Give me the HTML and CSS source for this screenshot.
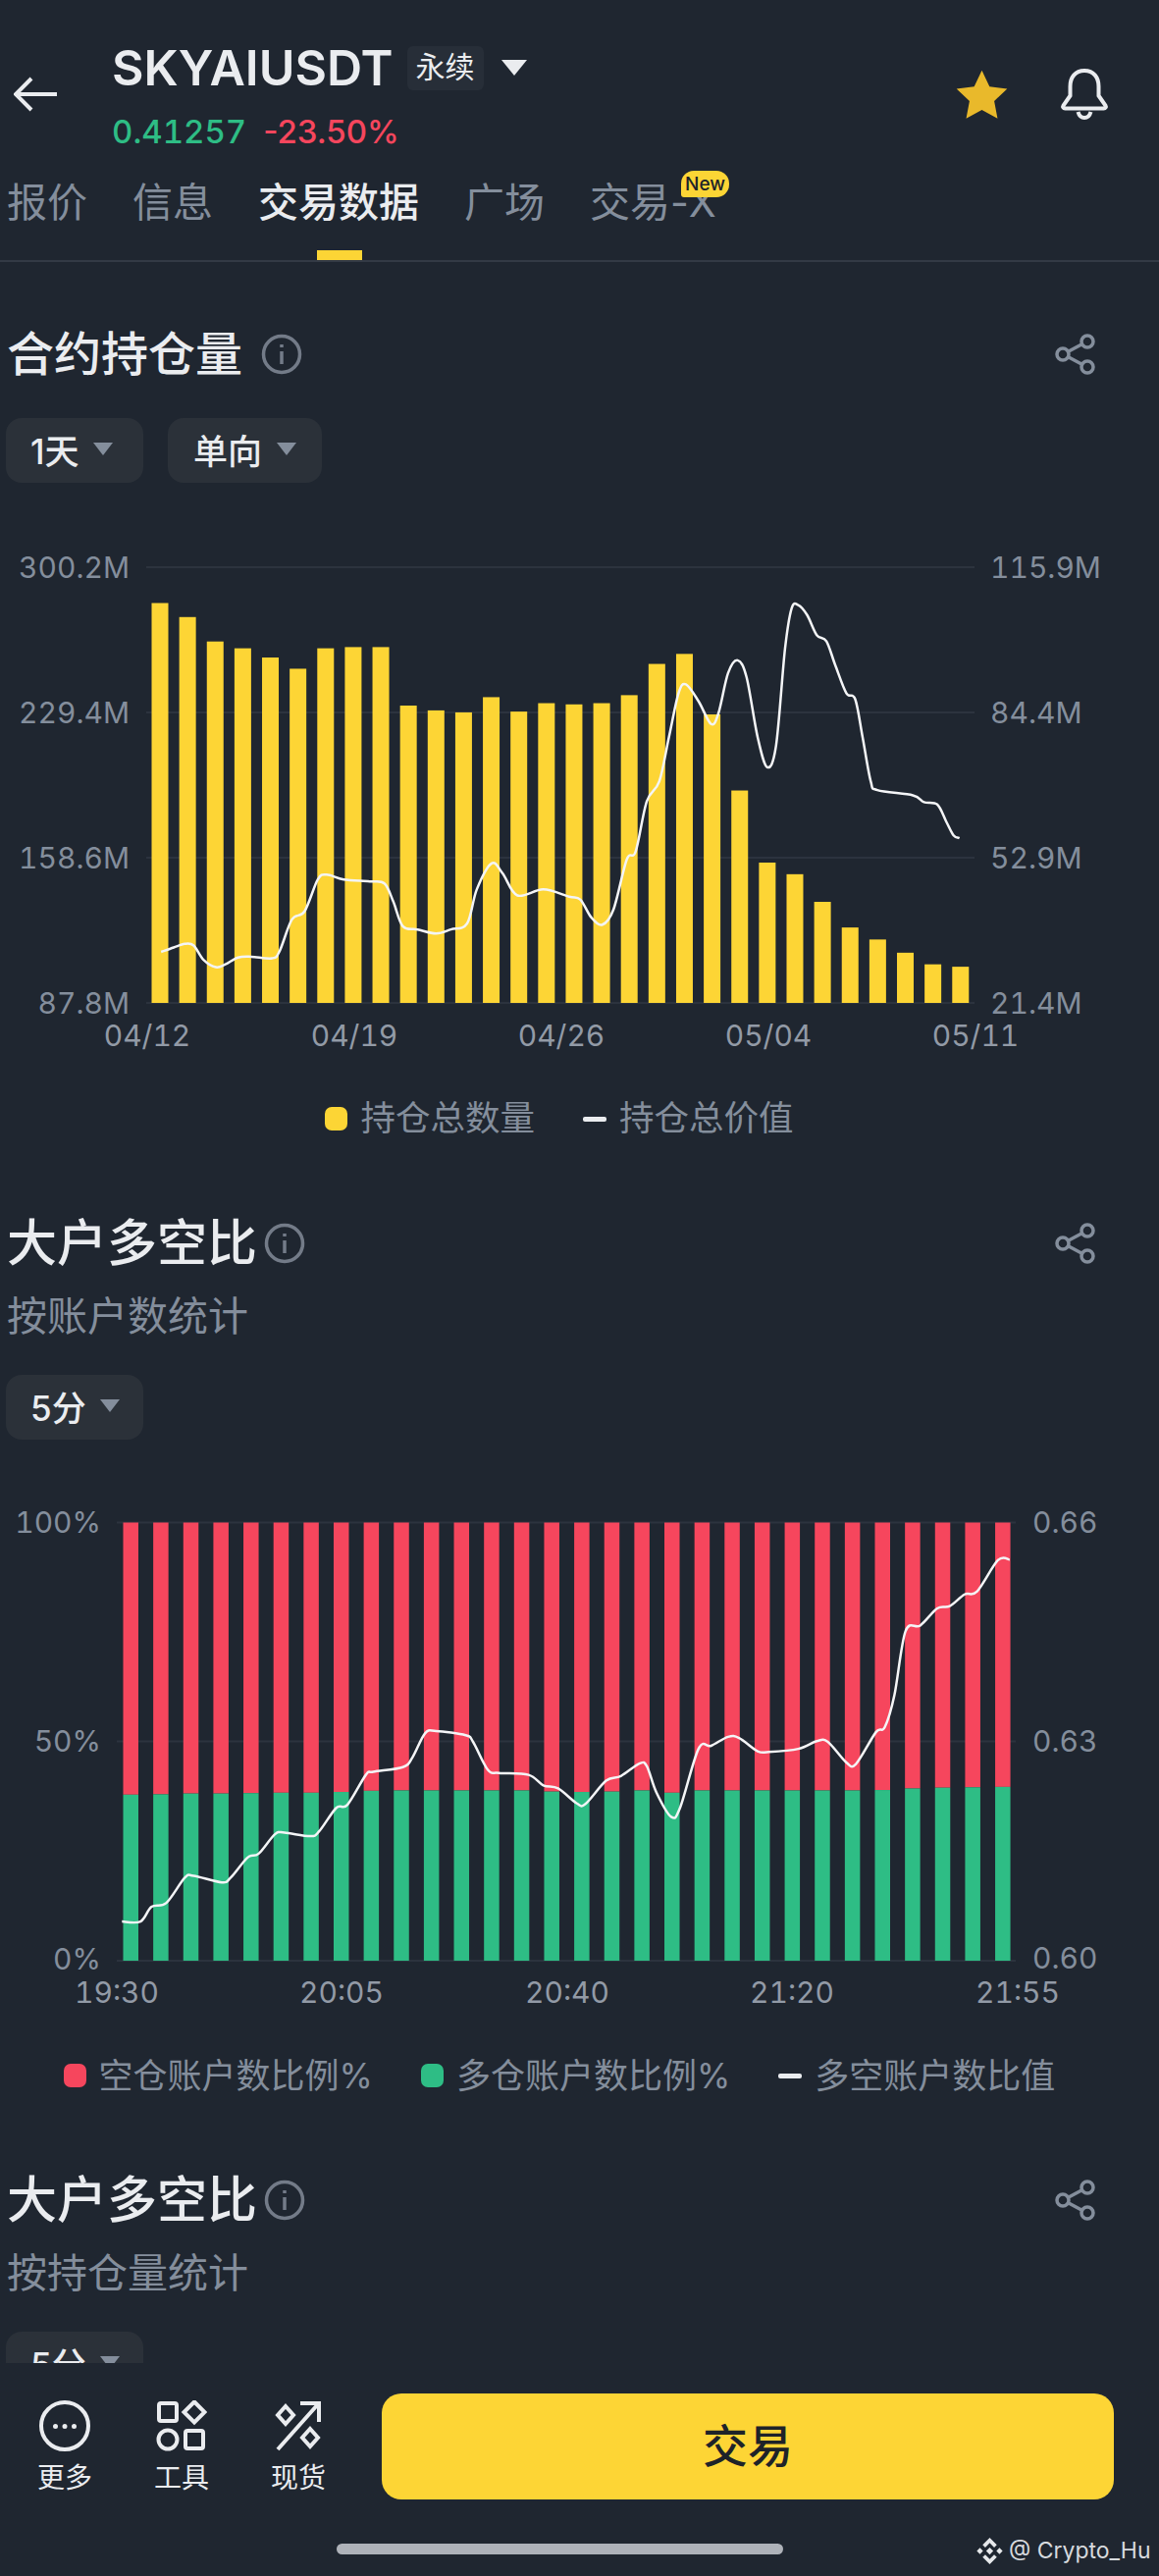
FILE: index.html
```html
<!DOCTYPE html>
<html lang="zh-CN">

<head>
    <meta charset="utf-8">
    <meta name="viewport" content="width=device-width, initial-scale=1">
    <title>SKYAIUSDT 交易数据</title>
    <link rel="stylesheet" href="styles.css">
</head>

<body>
    <main class="page">
        <!-- Symbol header -->
        <header class="topbar">
            <svg class="back" viewBox="0 0 46 36" aria-hidden="true">
                <path d="M44 18H3M18 2L2 18l16 16" />
            </svg>
            <div class="symbol">
                <div class="symbol-row">
                    <span class="symbol-name">SKYAIUSDT</span>
                    <span class="symbol-tag">永续</span>
                    <span class="symbol-caret"></span>
                </div>
                <div class="price-row">
                    <span class="price">0.41257</span>
                    <span class="change">-23.50%</span>
                </div>
            </div>
            <div class="actions">
                <svg class="star" viewBox="0 0 52 50" aria-hidden="true">
                    <path d="M26 1.5l7.4 15.6 17 2.2-12.5 11.8 3.2 16.9L26 39.7 10.9 48l3.2-16.9L1.6 19.3l17-2.2z" />
                </svg>
                <svg class="bell" viewBox="0 0 50 54" aria-hidden="true">
                    <path d="M25 3c-9.5 0-14.5 7-14.5 16v9.5L3.5 38.500c-.8 1.300 0 3 1.800 3h39.400c1.800 0 2.600-1.700 1.800-3l-7-10V19C39.500 10 34.500 3 25 3z" />
                    <path d="M18.5 45c1 3.6 3.4 6 6.5 6s5.500-2.400 6.500-6" />
                </svg>
            </div>
        </header>

        <nav class="tabs">
            <span class="tab">报价</span>
            <span class="tab">信息</span>
            <span class="tab tab-active">交易数据</span>
            <span class="tab">广场</span>
            <span class="tab tab-new">交易-X<span class="new-badge">New</span></span>
        </nav>

        <!-- Open interest -->
        <section class="section section-first">
            <div class="sec-head">
                <h2 class="sec-title">合约持仓量</h2>
                <svg class="info info-wide" viewBox="0 0 42 42" aria-hidden="true">
                    <circle cx="21" cy="21" r="18.5" />
                    <path d="M21 18v13M21 11v3" />
                </svg>
                <svg class="share" viewBox="0 0 42 42" aria-hidden="true">
                    <circle cx="33" cy="8" r="6" />
                    <circle cx="8" cy="21" r="6" />
                    <circle cx="33" cy="34" r="6" />
                    <path d="M13.5 18.2l14-7.4M13.5 23.8l14 7.4" />
                </svg>
            </div>
            <div class="chips">
                <span class="chip chip-short">1天<i class="caret"></i></span>
                <span class="chip">单向<i class="caret"></i></span>
            </div>
            <svg id="oi-chart" class="chart chart-oi" viewBox="0 560 1181 520" role="img">
                <g class="grid">
                    <path d="M149 579H993M149 727H993M149 875H993M149 1023H993" />
                </g>
                <g class="bars"></g>
                <g class="line"></g>
                <g class="axis-left">
                    <text x="132" y="579">300.2M</text>
                    <text x="132" y="727">229.4M</text>
                    <text x="132" y="875">158.6M</text>
                    <text x="132" y="1023">87.8M</text>
                </g>
                <g class="axis-right">
                    <text x="1009" y="579">115.9M</text>
                    <text x="1009" y="727">84.4M</text>
                    <text x="1009" y="875">52.9M</text>
                    <text x="1009" y="1023">21.4M</text>
                </g>
                <g class="axis-bottom">
                    <text x="150" y="1056">04/12</text>
                    <text x="361" y="1056">04/19</text>
                    <text x="572" y="1056">04/26</text>
                    <text x="783" y="1056">05/04</text>
                    <text x="994" y="1056">05/11</text>
                </g>
            </svg>
            <div class="legend">
                <span class="legend-item"><i class="swatch swatch-yellow"></i>持仓总数量</span>
                <span class="legend-item"><i class="dash"></i>持仓总价值</span>
            </div>
        </section>

        <!-- Top traders, by accounts -->
        <section class="section">
            <div class="sec-head">
                <h2 class="sec-title sec-title-lg">大户多空比</h2>
                <svg class="info" viewBox="0 0 42 42" aria-hidden="true">
                    <circle cx="21" cy="21" r="18.5" />
                    <path d="M21 18v13M21 11v3" />
                </svg>
                <svg class="share" viewBox="0 0 42 42" aria-hidden="true">
                    <circle cx="33" cy="8" r="6" />
                    <circle cx="8" cy="21" r="6" />
                    <circle cx="33" cy="34" r="6" />
                    <path d="M13.5 18.2l14-7.4M13.5 23.8l14 7.4" />
                </svg>
            </div>
            <p class="sec-sub">按账户数统计</p>
            <div class="chips chips-sub">
                <span class="chip chip-short">5分<i class="caret"></i></span>
            </div>
            <svg id="ratio-chart" class="chart chart-ratio" viewBox="0 1530 1181 530" role="img">
                <g class="grid">
                    <path d="M119 1553.5H1035M119 1776.5H1035M119 2000H1035" />
                </g>
                <g class="bars"></g>
                <g class="line"></g>
                <g class="axis-left">
                    <text x="103" y="1553">100%</text>
                    <text x="103" y="1776">50%</text>
                    <text x="103" y="1998">0%</text>
                </g>
                <g class="axis-right">
                    <text x="1052" y="1553">0.66</text>
                    <text x="1052" y="1776">0.63</text>
                    <text x="1052" y="1997">0.60</text>
                </g>
                <g class="axis-bottom">
                    <text x="119" y="2032">19:30</text>
                    <text x="348" y="2032">20:05</text>
                    <text x="578" y="2032">20:40</text>
                    <text x="807" y="2032">21:20</text>
                    <text x="1037" y="2032">21:55</text>
                </g>
            </svg>
            <div class="legend legend-tight">
                <span class="legend-item"><i class="swatch swatch-red"></i>空仓账户数比例%</span>
                <span class="legend-item"><i class="swatch swatch-green"></i>多仓账户数比例%</span>
                <span class="legend-item"><i class="dash"></i>多空账户数比值</span>
            </div>
        </section>

        <!-- Top traders, by position (cut off by the bottom bar) -->
        <section class="section">
            <div class="sec-head">
                <h2 class="sec-title sec-title-lg">大户多空比</h2>
                <svg class="info" viewBox="0 0 42 42" aria-hidden="true">
                    <circle cx="21" cy="21" r="18.5" />
                    <path d="M21 18v13M21 11v3" />
                </svg>
                <svg class="share" viewBox="0 0 42 42" aria-hidden="true">
                    <circle cx="33" cy="8" r="6" />
                    <circle cx="8" cy="21" r="6" />
                    <circle cx="33" cy="34" r="6" />
                    <path d="M13.5 18.2l14-7.4M13.5 23.8l14 7.4" />
                </svg>
            </div>
            <p class="sec-sub">按持仓量统计</p>
            <div class="chips chips-sub">
                <span class="chip chip-short">5分<i class="caret"></i></span>
            </div>
        </section>
    </main>

    <footer class="bottom">
        <div class="bottom-row">
            <div class="tool">
                <svg class="tool-icon" viewBox="0 0 52 52" aria-hidden="true">
                    <circle cx="26" cy="26" r="24" />
                    <path class="dots" d="M16.5 26.5v.1M26 26.5v.1M35.5 26.5v.1" />
                </svg>
                <span>更多</span>
            </div>
            <div class="tool">
                <svg class="tool-icon" viewBox="0 0 52 52" aria-hidden="true">
                    <rect x="3" y="3" width="18" height="18" rx="2" />
                    <path d="M39 1.5L49.5 12 39 22.5 28.5 12z" />
                    <circle cx="12" cy="40" r="9.5" />
                    <rect x="30" y="31" width="18" height="18" rx="2" />
                </svg>
                <span>工具</span>
            </div>
            <div class="tool">
                <svg class="tool-icon" viewBox="0 0 52 52" aria-hidden="true">
                    <path d="M5 50L46 4M28 3h19v19" />
                    <path d="M13 6l8 9-8 9-8-9zM38 29l8 9-8 9-8-9z" />
                </svg>
                <span>现货</span>
            </div>
            <button class="trade">交易</button>
        </div>
        <div class="home-bar"></div>
        <div class="watermark">
            <svg class="wm-logo" viewBox="0 0 32 32" aria-hidden="true">
                <path d="M16 1l8 8-3 3-5-5-5 5-3-3zM16 31l8-8-3-3-5 5-5-5-3 3zM5 12.5L8.5 16 5 19.5 1.5 16zM27 12.5l3.5 3.5-3.5 3.5-3.5-3.5zM16 12l4 4-4 4-4-4z" />
            </svg>
            <span>@ Crypto_Hu</span>
        </div>
    </footer>

    <script src="charts.js"></script>
</body>

</html>
```

FILE: styles.css
```css
* {
    box-sizing: border-box;
}

html,
body {
    margin: 0;
    height: 100%;
}

body {
    width: 1181px;
    height: 2625px;
    position: relative;
    overflow: hidden;
    background-color: #1f2630;
    color: #eaecef;
    font-family: Inter, "Noto Sans CJK SC", sans-serif;
}

.page {
    height: 2408px;
    overflow: hidden;
}

/* Header */
.topbar {
    display: flex;
    align-items: flex-start;
    height: 165px;
    padding: 46px 51px 0 14px;
}

.back {
    width: 46px;
    height: 36px;
    margin-top: 32px;
    fill: none;
    stroke: #eaecef;
    stroke-width: 4;
}

.symbol {
    margin-left: 54px;
}

.symbol-row {
    display: flex;
    align-items: center;
    height: 46px;
}

.symbol-name {
    font-size: 50px;
    font-weight: 600;
    line-height: 46px;
}

.symbol-tag {
    margin-left: 14px;
    padding: 0 9px;
    height: 45px;
    line-height: 42px;
    font-size: 30px;
    border-radius: 6px;
    background-color: #272e38;
}

.symbol-caret {
    margin-left: 18px;
    border-left: 13px solid transparent;
    border-right: 13px solid transparent;
    border-top: 16px solid #eaecef;
}

.price-row {
    display: flex;
    gap: 17px;
    margin-top: 22px;
    font-size: 33px;
    font-weight: 500;
    line-height: 40px;
}

.price {
    color: #2ebd85;
    font-variant-numeric: tabular-nums;
}

.change {
    color: #f6465d;
}

.actions {
    display: flex;
    gap: 52px;
    align-items: center;
    margin-left: auto;
    margin-top: 23px;
}

.star {
    width: 55px;
    height: 53px;
    fill: #e9b92b;
}

.bell {
    width: 50px;
    height: 54px;
    fill: none;
    stroke: #eaecef;
    stroke-width: 4;
}

/* Tabs */
.tabs {
    display: flex;
    gap: 46px;
    height: 102px;
    padding: 15px 0 0 7px;
    border-bottom: 2px solid #333a45;
}

.tab {
    position: relative;
    height: 85px;
    font-size: 41px;
    line-height: 52px;
    color: #848e9c;
}

.tab-active {
    color: #eaecef;
    font-weight: 500;
}

.tab-active::after {
    content: "";
    position: absolute;
    left: 60px;
    bottom: 0;
    width: 46px;
    height: 10px;
    background-color: #fcd535;
}

.new-badge {
    position: absolute;
    left: 93px;
    top: -6px;
    width: 49px;
    height: 27px;
    border-radius: 13px 13px 13px 3px;
    background-color: #fcd535;
    color: #1e2329;
    font-size: 19px;
    font-weight: 500;
    line-height: 27px;
    text-align: center;
}

/* Sections */
.section {
    padding-top: 77px;
}

.section-first {
    padding-top: 64px;
}

.sec-head {
    display: flex;
    align-items: center;
    height: 60px;
    padding: 0 62px 0 7px;
}

.sec-title {
    margin: 0;
    font-size: 48px;
    font-weight: 500;
    line-height: 60px;
}

.sec-title-lg {
    font-size: 51px;
}

.info {
    width: 42px;
    height: 42px;
    margin-left: 7px;
    fill: none;
    stroke: #737b88;
    stroke-width: 3.5;
}

.info-wide {
    margin-left: 19px;
}

.share {
    width: 42px;
    height: 42px;
    margin-left: auto;
    margin-right: 2px;
    fill: none;
    stroke: #848e9c;
    stroke-width: 3.5;
}

.sec-sub {
    margin: 24px 0 0 7px;
    font-size: 41px;
    line-height: 40px;
    color: #848e9c;
}

.chips {
    display: flex;
    gap: 25px;
    margin: 35px 0 0 6px;
}

.chips-sub {
    margin-top: 40px;
}

.chip {
    display: flex;
    align-items: center;
    gap: 15px;
    height: 66px;
    padding: 0 26px 3px;
    border-radius: 16px;
    background-color: #2b3139;
    font-size: 35px;
    font-weight: 500;
}

.chip-short {
    width: 140px;
    gap: 14px;
    padding: 0 0 3px 25px;
}

.caret {
    border-left: 10px solid transparent;
    border-right: 10px solid transparent;
    border-top: 13px solid #848e9c;
}

/* Charts */
.chart {
    display: block;
    width: 1181px;
}

.chart-oi {
    height: 520px;
    margin-top: 67px;
}

.chart-ratio {
    height: 530px;
    margin-top: 61px;
}

.chart text {
    font-size: 30px;
    font-variant-numeric: tabular-nums;
    dominant-baseline: central;
}

.grid path {
    fill: none;
    stroke: #2c333e;
    stroke-width: 2;
}

.line path {
    fill: none;
    stroke: #f4f5f7;
    stroke-width: 2.5;
    stroke-linejoin: round;
}

.axis-left text {
    text-anchor: end;
    fill: #848e9c;
}

.axis-right text {
    fill: #848e9c;
}

.axis-bottom text {
    text-anchor: middle;
    fill: #929aa6;
}

.legend {
    display: flex;
    justify-content: center;
    gap: 49px;
    margin-top: 41px;
    padding-right: 41px;
    height: 40px;
}

.legend-tight {
    margin-top: 37px;
}

.legend-item {
    display: flex;
    align-items: center;
    gap: 13px;
    font-size: 35.5px;
    line-height: 40px;
    color: #848e9c;
}

.legend-tight .legend-item {
    font-size: 35px;
}

.swatch {
    width: 23px;
    height: 24px;
    border-radius: 7px;
}

.swatch-yellow {
    background-color: #fcd535;
}

.swatch-red {
    background-color: #f6465d;
}

.swatch-green {
    background-color: #2ebd85;
}

.dash {
    width: 24px;
    height: 5px;
    border-radius: 2px;
    background-color: #eaecef;
}

/* Bottom bar */
.bottom {
    height: 217px;
    padding-top: 31px;
}

.bottom-row {
    display: flex;
    align-items: flex-start;
    gap: 39px;
    padding: 0 46px 0 26px;
}

.tool {
    display: flex;
    flex-direction: column;
    align-items: center;
    width: 80px;
    margin-top: 7px;
    font-size: 28px;
    line-height: 36px;
}

.tool-icon {
    width: 52px;
    height: 52px;
    margin-bottom: 9px;
    fill: none;
    stroke: #eaecef;
    stroke-width: 4;
}

.dots {
    stroke-width: 5;
    stroke-linecap: round;
}

.trade {
    flex: 1;
    height: 108px;
    margin-left: 6px;
    padding-bottom: 9px;
    border: 0;
    border-radius: 20px;
    background-color: #fdd535;
    color: #1e2329;
    font-family: inherit;
    font-size: 46px;
    font-weight: 500;
}

.home-bar {
    width: 455px;
    height: 11px;
    margin: 45px 0 0 343px;
    border-radius: 6px;
    background-color: #aeb2b9;
}

/* Watermark sits over the corner of the page */
.watermark {
    position: absolute;
    left: 994px;
    top: 2584px;
    display: flex;
    align-items: center;
    gap: 5px;
    font-size: 23px;
    line-height: 30px;
    color: #d7dade;
    white-space: nowrap;
}

.wm-logo {
    width: 29px;
    height: 29px;
    fill: #e6e8eb;
}
```

FILE: charts.js
```js
// points traced off the screen, in a 1568 wide grid (x) and a per chart y scale
const XS = 1181 / 1568;
const SVG_NS = 'http://www.w3.org/2000/svg';

function add(parent, tag, attrs) {
    const el = document.createElementNS(SVG_NS, tag);
    for (const key in attrs) {
        el.setAttribute(key, attrs[key]);
    }
    parent.appendChild(el);
    return el;
}

// Catmull-Rom through the points so the line stays smooth
function smoothPath(pts) {
    let d = `M${pts[0][0]} ${pts[0][1]}`;
    for (let i = 0; i < pts.length - 1; i++) {
        const p0 = pts[i - 1] || pts[i];
        const p1 = pts[i];
        const p2 = pts[i + 1];
        const p3 = pts[i + 2] || p2;
        const c1x = p1[0] + (p2[0] - p0[0]) / 6;
        const c1y = p1[1] + (p2[1] - p0[1]) / 6;
        const c2x = p2[0] - (p3[0] - p1[0]) / 6;
        const c2y = p2[1] - (p3[1] - p1[1]) / 6;
        d += `C${c1x} ${c1y} ${c2x} ${c2y} ${p2[0]} ${p2[1]}`;
    }
    return d;
}

function drawLine(svg, flat, toY) {
    const pts = [];
    for (let i = 0; i < flat.length; i += 2) {
        pts.push([flat[i] * XS, toY(flat[i + 1])]);
    }
    add(svg.querySelector('.line'), 'path', { d: smoothPath(pts) });
}

// Open interest
const oiY = (v) => 540 + v / 2.45;
const oiTops = [185, 220, 281, 298, 321, 349, 298, 295, 295, 441, 453, 458, 420, 456, 435,
    438, 435, 415, 337, 312, 463, 653, 833, 862, 931, 995, 1025, 1058, 1087, 1093];
const oiLine = [218, 1056, 235, 1045, 250, 1036, 262, 1040, 275, 1075, 292, 1094, 305, 1087,
    322, 1070, 340, 1068, 368, 1072, 378, 1055, 395, 975, 412, 955, 430, 875, 442, 863, 465, 875,
    500, 880, 520, 885, 532, 930, 545, 992, 565, 1000, 590, 1010, 610, 1000, 632, 985, 645, 900,
    665, 835, 680, 860, 700, 915, 735, 900, 770, 918, 785, 925, 800, 970, 815, 988, 830, 950,
    848, 825, 860, 805, 875, 680, 892, 630, 905, 520, 918, 410, 928, 388, 945, 430, 962, 487,
    972, 460, 985, 360, 998, 328, 1010, 370, 1025, 520, 1038, 595, 1050, 540, 1062, 300, 1071, 198,
    1080, 190, 1092, 215, 1105, 265, 1118, 280, 1130, 340, 1145, 410, 1157, 425, 1167, 520,
    1178, 630, 1187, 652, 1235, 665, 1250, 682, 1268, 688, 1280, 730, 1290, 765, 1298, 772];

const oiChart = document.getElementById('oi-chart');
oiTops.forEach((top, i) => {
    add(oiChart.querySelector('.bars'), 'rect', {
        x: 154.5 + i * 28.13,
        y: oiY(top),
        width: 17,
        height: 1023 - oiY(top),
        fill: '#fdd535'
    });
});
drawLine(oiChart, oiLine, oiY);

// Long / short ratio
const ratioY = (v) => 1520 + v / 2.529;
const splits = [786, 785, 783, 783, 782, 781, 781, 779, 776, 775, 775, 775, 775, 775, 778,
    779, 778, 775, 781, 775, 775, 775, 775, 775, 775, 774, 770, 768, 767, 766];
const ratioLine = [165, 1113, 190, 1113, 205, 1075, 225, 1065, 250, 1000, 262, 995, 300, 1012,
    312, 1000, 335, 948, 350, 938, 372, 888, 385, 884, 420, 893, 432, 880, 455, 820, 470, 812,
    495, 735, 505, 727, 545, 715, 558, 690, 575, 628, 590, 622, 630, 633, 640, 650, 660, 722,
    675, 730, 715, 735, 735, 762, 755, 770, 780, 808, 792, 810, 820, 750, 840, 738, 865, 706,
    875, 712, 888, 780, 908, 843, 920, 820, 945, 668, 962, 660, 985, 637, 1000, 640, 1025, 674,
    1040, 676, 1080, 668, 1105, 648, 1120, 650, 1145, 703, 1158, 707, 1185, 625, 1197, 612,
    1210, 530, 1225, 365, 1245, 350, 1268, 306, 1285, 300, 1305, 270, 1322, 262, 1350, 182, 1366, 180];

const ratioChart = document.getElementById('ratio-chart');
splits.forEach((split, i) => {
    const bars = ratioChart.querySelector('.bars');
    const x = 125.5 + i * 30.64;
    const mid = ratioY(split);
    add(bars, 'rect', { x: x, y: 1553.5, width: 15.5, height: mid - 1553.5, fill: '#f6465d' });
    add(bars, 'rect', { x: x, y: mid, width: 15.5, height: 2000 - mid, fill: '#2ebd85' });
});
drawLine(ratioChart, ratioLine, ratioY);
```
